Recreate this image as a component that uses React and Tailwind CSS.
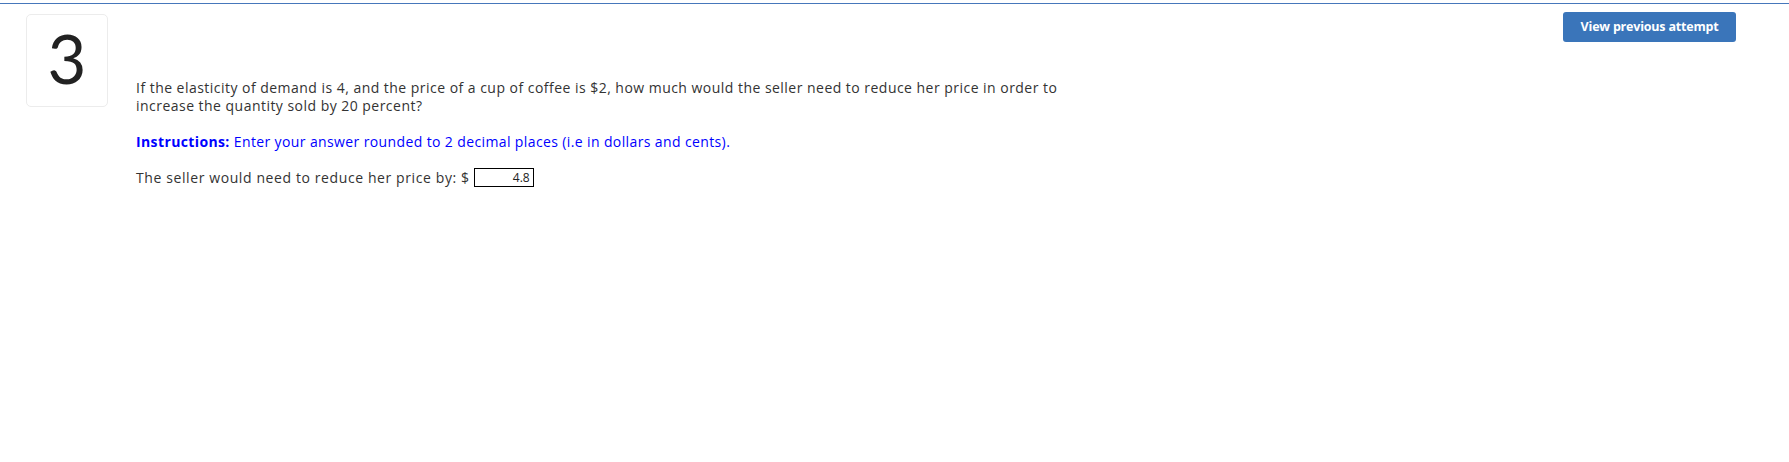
import React from "react";

export default function App() {
  return (
    <div className="w-[1789px] h-[462px] bg-white overflow-hidden" style={{ fontFamily: "'Open Sans', Lato, sans-serif" }}>
      <div className="h-[3px]" />
      <div className="border-t border-[#4677bb]" />
      <div className="flex">
        <div className="ml-[26px] mt-[10px] w-[82px] h-[93px] shrink-0 rounded-[5px] border border-[#ececec] flex items-center justify-center">
          <span className="text-[67px] font-normal leading-none text-[#222222] -mt-[4px]" style={{ fontFamily: "Lato, sans-serif" }}>3</span>
        </div>
        <div className="flex-1 ml-[28px] flex flex-col">
          <div className="flex justify-end mt-[8px] mr-[53px]">
            <button className="w-[173px] h-[30px] rounded-[3px] bg-[#3a75ba] text-white text-[12.5px] font-bold tracking-[-0.2px]">
              View previous attempt
            </button>
          </div>
          <div className="mt-[37px] text-[14px] leading-[17.5px] text-[#333333] w-[960px] tracking-[0.47px]">
            <p>
              If the elasticity of demand is 4, and the price of a cup of coffee is $2, how much would the seller need to reduce her price in order to increase the quantity sold by 20 percent?
            </p>
            <p className="mt-[18.5px] text-[#0000ff] tracking-[0.38px]">
              <span className="font-bold">Instructions:</span> Enter your answer rounded to 2 decimal places (i.e in dollars and cents).
            </p>
            <p className="mt-[18px] flex items-center tracking-[0.6px]">
              <span>The seller would need to reduce her price by: $</span>
              <span className="ml-[4px] w-[60px] h-[19px] border border-black text-right pr-[3px] text-[12px] leading-[17px] tracking-normal text-[#222222]">4.8</span>
            </p>
          </div>
        </div>
      </div>
    </div>
  );
}
